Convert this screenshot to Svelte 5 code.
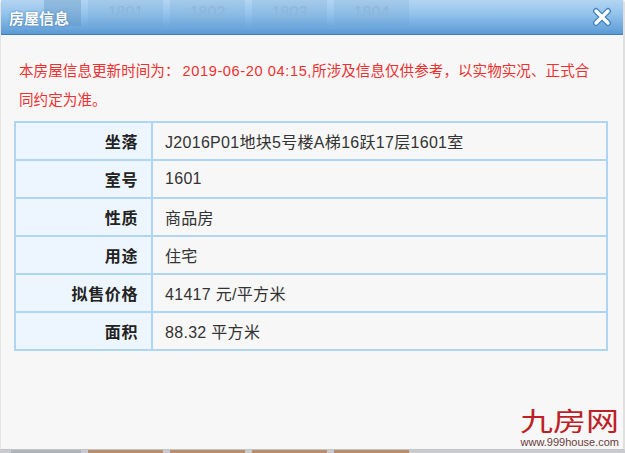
<script>
    const rows = [
        ['坐落', 'J2016P01地块5号楼A梯16跃17层1601室'],
        ['室号', '1601'],
        ['性质', '商品房'],
        ['用途', '住宅'],
        ['拟售价格', '41417 元/平方米'],
        ['面积', '88.32 平方米']
    ];
    const ghostTabs = ['1801', '1802', '1803', '1804'];
</script>

<main class="page">
    <div class="dialog">
        <header class="titlebar">
            <div class="ghosts">
                <span class="ghost first"></span>
                {#each ghostTabs as t}
                    <span class="ghost">{t}</span>
                {/each}
            </div>
            <h1>房屋信息</h1>
            <svg class="close" viewBox="0 0 20 20" width="20" height="20">
                <path d="M4 4 L16 16 M16 4 L4 16" stroke="#3f7fbd" stroke-width="6" stroke-linecap="round" />
                <path d="M4 4 L16 16 M16 4 L4 16" stroke="#fff" stroke-width="3.4" stroke-linecap="round" />
            </svg>
        </header>

        <div class="body">
            <p class="notice">本房屋信息更新时间为：<span class="date">2019-06-20 04:15,</span>所涉及信息仅供参考，以实物实况、正式合同约定为准。</p>
            <table>
                <tbody>
                    {#each rows as [label, value]}
                        <tr>
                            <th>{label}</th>
                            <td>{value}</td>
                        </tr>
                    {/each}
                </tbody>
            </table>
        </div>

        <div class="logo">
            <span class="mark">九房网</span>
            <span class="url">www.999house.com</span>
        </div>
    </div>
    <div class="under">
        <span class="strip grey"></span>
        <span class="strip brown"></span>
        <span class="strip brown"></span>
        <span class="strip brown"></span>
        <span class="strip brown"></span>
    </div>
</main>

<style>
    :global(body) {
        margin: 0;
        background: #f7f7f7;
    }

    .page {
        width: 625px;
        height: 453px;
        overflow: hidden;
        display: flex;
        flex-direction: column;
        font-family: "Liberation Sans", "Noto Sans CJK SC", sans-serif;
    }

    .dialog {
        position: relative;
        height: 450px;
        flex: none;
        box-sizing: border-box;
        background: #f7f7f7;
        border-left: 1px solid #e4e4e4;
        border-right: 2px solid #e0e0e0;
        border-bottom: 1px solid #c4c4c4;
        border-radius: 4px 4px 0 0;
    }

    .titlebar {
        position: relative;
        height: 35px;
        box-sizing: border-box;
        display: flex;
        align-items: center;
        justify-content: space-between;
        padding: 0 11px 0 8px;
        background: linear-gradient(#b4d5f2, #94c4ec 40%, #5b9ad6);
        border-bottom: 1px solid #3f7fc0;
    }

    .ghosts {
        position: absolute;
        left: 43px;
        top: 0;
        height: 26px;
        display: flex;
        gap: 7px;
    }

    .ghost {
        width: 75px;
        height: 26px;
        font-size: 16px;
        line-height: 26px;
        text-align: center;
        color: #8fb6d9;
        background: rgba(110, 160, 205, 0.2);
    }

    .ghost.first {
        width: 37px;
        background: rgba(90, 140, 185, 0.35);
    }

    h1 {
        position: relative;
        margin: 0;
        font-size: 15px;
        font-weight: bold;
        color: #fff;
        text-shadow: 0 0 2px #3d6c9e;
    }

    .close {
        position: relative;
    }

    .body {
        padding: 22px 13px 0 13px;
    }

    .notice {
        margin: 0 15px 6px 5px;
        font-size: 14.6px;
        line-height: 29px;
        color: #f03030;
    }

    .date {
        margin-left: 3px;
        letter-spacing: 0.6px;
    }

    table {
        width: 594px;
        border-collapse: collapse;
        table-layout: fixed;
        font-size: 16px;
        letter-spacing: 0.3px;
        color: #333;
    }

    th, td {
        height: 36px;
        padding: 0;
        border: 2px solid #aed6f3;
    }

    th {
        width: 122px;
        padding-right: 13px;
        text-align: right;
        font-weight: bold;
        letter-spacing: 0.6px;
        background: #edf6fe;
        color: #222;
    }

    td {
        padding-left: 12px;
        background: #f7f7f7;
    }

    .logo {
        position: absolute;
        right: 4px;
        bottom: 1px;
        display: flex;
        flex-direction: column;
        align-items: flex-end;
        line-height: 1;
    }

    .mark {
        font-size: 33px;
        color: #bd1f27;
        transform: scaleY(0.8);
        transform-origin: bottom;
    }

    .url {
        margin-top: 2px;
        font-size: 11px;
        color: #6a3a3a;
    }

    .under {
        height: 3px;
        flex: none;
        display: flex;
        gap: 7px;
        padding-left: 11px;
        background: #c8ccd0;
    }

    .strip {
        width: 75px;
    }

    .strip.grey {
        width: 70px;
        background: #aeb4ba;
    }

    .strip.brown {
        background: #b98e6c;
    }
</style>
